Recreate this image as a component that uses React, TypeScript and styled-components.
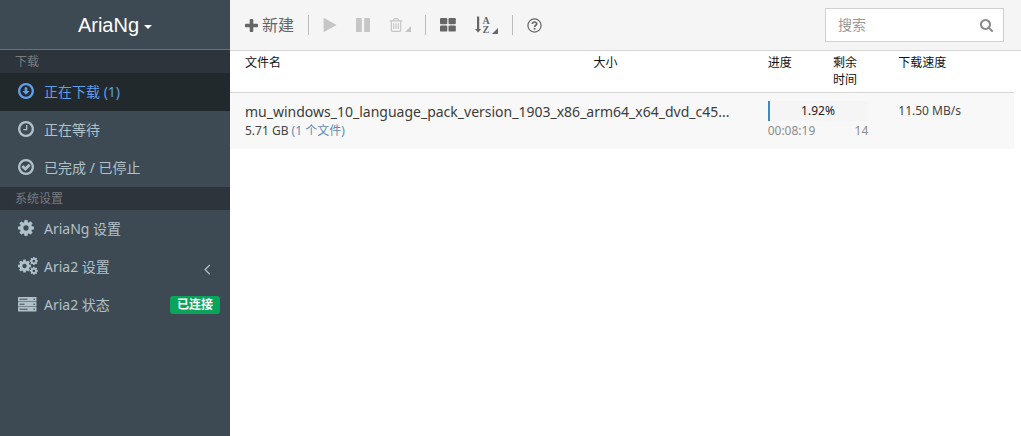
import React from "react";
import styled, { createGlobalStyle, css } from "styled-components";

const GlobalStyle = createGlobalStyle`
  *, *::before, *::after { box-sizing: border-box; }
  body {
    margin: 0;
    background: #fff;
    color: #444;
    font-family: "Noto Sans", "Noto Sans CJK SC", sans-serif;
    font-size: 14px;
    line-height: 20px;
  }
  a { color: inherit; text-decoration: none; }
  button { border: 0; padding: 0; background: none; font: inherit; color: inherit; cursor: pointer; }
  ul { list-style: none; margin: 0; padding: 0; }
`;

const Layout = styled.div`
  display: flex;
  min-height: 100vh;
`;

const Sidebar = styled.aside`
  flex: 0 0 230px;
  background: #3d4a53;
  color: #b0c1ca;
`;

const Brand = styled.header`
  display: flex;
  align-items: center;
  justify-content: center;
  height: 50px;
  border-bottom: 1px solid #6b7175;
`;

const BrandButton = styled.button`
  display: flex;
  align-items: center;
  gap: 5px;
  color: #fff;
  font-family: "Liberation Sans", sans-serif;
  font-size: 20px;
`;

const Caret = styled.span`
  margin-top: 4px;
  border: 4px solid transparent;
  border-top-color: currentColor;
  border-bottom: 0;
`;

const SectionTitle = styled.h2`
  margin: 0;
  padding: 0 15px;
  background: #2d343c;
  color: #777c80;
  font-size: 12px;
  font-weight: 400;
  line-height: 23px;
`;

const NavLink = styled.a<{ $active?: boolean }>`
  display: flex;
  align-items: center;
  height: 38px;
  padding: 0 10px 0 18px;
  ${({ $active }) =>
    $active &&
    css`
      background: #22292d;
      color: #5f9ee8;
    `}
`;

const NavIcon = styled.span`
  display: flex;
  width: 26px;
  padding-bottom: 2px;
`;

const NavLabel = styled.span`
  flex: 1;
`;

const NavArrow = styled.span`
  display: flex;
  padding: 4px 4px 0 0;
`;

const Badge = styled.span`
  padding: 0 7px;
  border-radius: 3px;
  background: #0aa35c;
  color: #fff;
  font-size: 12px;
  font-weight: 700;
  line-height: 18px;
`;

const Main = styled.main`
  flex: 1;
  min-width: 0;
`;

const Toolbar = styled.div`
  display: flex;
  align-items: center;
  gap: 14px;
  height: 51px;
  padding: 0 17px 0 15px;
  border-bottom: 1px solid #d6d6d6;
  background: #f5f5f5;
  color: #666;
`;

const ToolGroup = styled.div`
  display: flex;
  align-items: center;
  gap: 19px;
`;

const ToolButton = styled.button`
  display: flex;
  align-items: center;
  gap: 4px;
  font-size: 16px;
  &:disabled {
    color: #c6c6c6;
    cursor: default;
  }
`;

const MenuCorner = styled.span`
  align-self: flex-end;
  margin-left: -2px;
  border-left: 6px solid transparent;
  border-bottom: 6px solid currentColor;
`;

const Divider = styled.span`
  width: 1px;
  height: 20px;
  background: #bbb;
`;

const SearchBox = styled.form`
  display: flex;
  align-items: center;
  width: 179px;
  height: 34px;
  margin-left: auto;
  padding: 0 10px 0 12px;
  border: 1px solid #d0d0d0;
  background: #fff;
  color: #8a8a8a;
`;

const SearchInput = styled.input`
  flex: 1;
  min-width: 0;
  padding: 0;
  border: 0;
  outline: 0;
  background: none;
  font: inherit;
  &::placeholder { color: #999; opacity: 1; }
`;

const TableArea = styled.div`
  padding-right: 7px;
`;

const Table = styled.table`
  width: 100%;
  border-collapse: collapse;
  table-layout: fixed;
  font-size: 12px;
`;

const Col = styled.col<{ $share: string }>`
  width: ${({ $share }) => $share};
`;

const HeadCell = styled.th`
  padding: 3px 15px 4px;
  border-bottom: 1px solid #d6d6d6;
  color: #111;
  font-weight: 400;
  line-height: 17px;
  text-align: left;
  vertical-align: top;
`;

const TaskRow = styled.tr`
  background: #f8f8f8;
`;

const Cell = styled.td`
  height: 56px;
  padding: 8px 15px 0;
  vertical-align: top;
`;

const TaskName = styled.div`
  overflow: hidden;
  color: #3c3c3c;
  font-size: 14px;
  line-height: 22px;
  white-space: nowrap;
`;

const TaskInfo = styled.div`
  line-height: 16px;
`;

const FilesLink = styled.a`
  color: #6389b0;
`;

const Progress = styled.div`
  position: relative;
  height: 20px;
  background: #f5f5f5;
  color: #222;
  line-height: 20px;
  text-align: center;
`;

const ProgressBar = styled.div`
  position: absolute;
  inset: 0 auto 0 0;
  background: #3c8dbc;
`;

const ProgressInfo = styled.div`
  display: flex;
  justify-content: space-between;
  color: #8c8c8c;
  line-height: 20px;
`;

const Speed = styled.div`
  line-height: 20px;
`;

const RING =
  "M1440 896q0-148-73-273t-198-198-273-73-273 73-198 198-73 273 73 273 198 198 273 73 273-73 198-198 73-273zm224 0q0 209-103 385.5t-279.5 279.5-385.5 103-385.5-103-279.5-279.5-103-385.5 103-385.5 279.5-279.5 385.5-103 385.5 103 279.5 279.5 103 385.5z";

const COG =
  "M1152 896q0-106-75-181t-181-75-181 75-75 181 75 181 181 75 181-75 75-181zm512-109v222q0 12-8 23t-20 13l-185 28q-19 54-39 91 35 50 107 138 10 12 10 25t-9 23q-27 37-99 108t-94 71q-12 0-26-9l-138-108q-44 23-91 38-16 136-29 186-7 28-36 28h-222q-14 0-24.5-8.5t-11.5-21.5l-28-184q-49-16-90-37l-141 107q-10 9-25 9-14 0-25-11-126-114-165-168-7-10-7-23 0-12 8-23 15-21 51-66.5t54-70.5q-27-50-41-99l-183-27q-13-2-21-12.5t-8-23.5v-222q0-12 8-23t19-13l186-28q14-46 39-92-40-57-107-138-10-12-10-24 0-10 9-23 26-36 98.5-107.5t94.5-71.5q13 0 26 10l138 107q44-23 91-38 16-136 29-186 7-28 36-28h222q14 0 24.5 8.5t11.5 21.5l28 184q49 16 90 37l142-107q9-9 24-9 13 0 25 10 129 119 165 170 7 8 7 22 0 12-8 23-15 21-51 66.5t-54 70.5q26 50 41 98l183 28q13 2 21 12.5t8 23.5z";

const PATHS = {
  down:
    "M1216 928q0 12-10 24l-287 287q-10 9-23 9t-23-9l-288-288q-9-9-9-23 0-13 9.500-22.500t22.500-9.500h160v-320q0-13 9.500-22.500t22.500-9.500h192q13 0 22.500 9.500t9.500 22.500v320h160q14 0 23 9t9 23z" +
    RING,
  clock:
    "M1024 544v448q0 14-9 23t-23 9h-320q-14 0-23-9t-9-23v-64q0-14 9-23t23-9h224v-352q0-14 9-23t23-9h64q14 0 23 9t9 23z" + RING,
  check:
    "M1299 813l-422 422q-19 19-45 19t-45-19l-294-294q-19-19-19-45t19-45l102-102q19-19 45-19t45 19l147 147 275-275q19-19 45-19t45 19l102 102q19 19 19 45t-19 45z" +
    RING,
  cog: COG,
  left:
    "M1203 544q0 13-10 23l-393 393 393 393q10 10 10 23t-10 23l-50 50q-10 10-23 10t-23-10l-466-466q-10-10-10-23t10-23l466-466q10-10 23-10t23 10l50 50q10 10 10 23z",
  plus:
    "M1600 736v192q0 40-28 68t-68 28h-416v416q0 40-28 68t-68 28h-192q-40 0-68-28t-28-68v-416h-416q-40 0-68-28t-28-68v-192q0-40 28-68t68-28h416v-416q0-40 28-68t68-28h192q40 0 68 28t28 68v416h416q40 0 68 28t28 68z",
  play:
    "M1576 927l-1328 738q-23 13-39.500 3t-16.500-36v-1472q0-26 16.500-36t39.500 3l1328 738q23 13 23 31t-23 31z",
  pause:
    "M1664 192v1408q0 26-19 45t-45 19h-512q-26 0-45-19t-19-45v-1408q0-26 19-45t45-19h512q26 0 45 19t19 45zm-896 0v1408q0 26-19 45t-45 19h-512q-26 0-45-19t-19-45v-1408q0-26 19-45t45-19h512q26 0 45 19t19 45z",
  trash:
    "M704 736v576q0 14-9 23t-23 9h-64q-14 0-23-9t-9-23v-576q0-14 9-23t23-9h64q14 0 23 9t9 23zm256 0v576q0 14-9 23t-23 9h-64q-14 0-23-9t-9-23v-576q0-14 9-23t23-9h64q14 0 23 9t9 23zm256 0v576q0 14-9 23t-23 9h-64q-14 0-23-9t-9-23v-576q0-14 9-23t23-9h64q14 0 23 9t9 23zm128 724v-948h-896v948q0 22 7 40.5t14.5 27 10.5 8.5h832q3 0 10.5-8.5t14.5-27 7-40.5zm-672-1076h448l-48-117q-7-9-17-11h-317q-10 2-17 11zm928 32v64q0 14-9 23t-23 9h-96v948q0 83-47 143.5t-113 60.5h-832q-66 0-113-58.5t-47-141.5v-952h-96q-14 0-23-9t-9-23v-64q0-14 9-23t23-9h309l70-167q15-37 54-63t79-26h320q40 0 79 26t54 63l70 167h309q14 0 23 9t9 23z",
  search:
    "M1216 832q0-185-131.500-316.500t-316.500-131.500-316.500 131.500-131.500 316.500 131.500 316.500 316.500 131.500 316.500-131.500 131.500-316.500zm512 832q0 52-38 90t-90 38q-54 0-90-38l-343-342q-179 124-399 124-143 0-273.500-55.500t-225-150-150-225-55.500-273.500 55.500-273.500 150-225 225-150 273.500-55.500 273.500 55.500 225 150 150 225 55.500 273.500q0 220-124 399l343 343q37 37 37 90z",
};

/* viewBox of the round and cog glyphs, trimmed to their ink */
const TIGHT = "128 128 1536 1536";

function Glyph({ name, size, box = TIGHT }: { name: keyof typeof PATHS; size: number; box?: string }) {
  return (
    <svg width={size} height={size} viewBox={box} fill="currentColor" fillRule="evenodd" aria-hidden="true">
      <path d={PATHS[name]} />
    </svg>
  );
}

function CogsIcon() {
  return (
    <svg width="20" height="18" viewBox="0 0 20 18" fill="currentColor" aria-hidden="true">
      <g fillRule="evenodd">
        <path d={COG} transform="translate(-1.100 1.400) scale(.0085)" />
        <path d={COG} transform="translate(11.200 -.6) scale(.0052)" />
        <path d={COG} transform="translate(11.200 9.200) scale(.0052)" />
      </g>
    </svg>
  );
}

function ServerIcon() {
  return (
    <svg width="19" height="15" viewBox="0 0 19 15" aria-hidden="true">
      {[0, 5, 10].map((y, i) => (
        <g key={y}>
          <rect x="0" y={y} width="18.500" height="4.400" rx=".6" fill="currentColor" />
          <rect x="1.500" y={y + 1.7} width={[8, 5, 8][i]} height="1" fill="#3d4a53" />
          <circle cx="16.200" cy={y + 2.2} r=".8" fill="#3d4a53" />
        </g>
      ))}
    </svg>
  );
}

function TilesIcon() {
  return (
    <svg width="16" height="14" viewBox="0 0 16 14" fill="currentColor" aria-hidden="true">
      <rect x="0" y="0" width="7.300" height="6.200" rx="1.200" />
      <rect x="8.500" y="0" width="7.300" height="6.200" rx="1.200" />
      <rect x="0" y="7.400" width="7.300" height="6.200" rx="1.200" />
      <rect x="8.500" y="7.400" width="7.300" height="6.200" rx="1.200" />
    </svg>
  );
}

function SortIcon() {
  return (
    <svg width="15" height="18" viewBox="0 0 15 18" fill="currentColor" aria-hidden="true">
      <path d="M2 .5h2.200v12.500h2L3.100 16.500 0 13h2z" />
      <text x="7.500" y="7.500" fontFamily="Liberation Serif, serif" fontSize="10" fontWeight="700">A</text>
      <text x="7.500" y="16.500" fontFamily="Liberation Serif, serif" fontSize="10" fontWeight="700">Z</text>
    </svg>
  );
}

function HelpIcon() {
  return (
    <svg width="15" height="15" viewBox="0 0 15 15" fill="none" stroke="currentColor" aria-hidden="true">
      <circle cx="7.500" cy="7.500" r="6.600" strokeWidth="1.200" />
      <path d="M5.300 6Q5.500 4 7.500 4T9.700 5.900C9.700 7.300 7.600 7.300 7.600 9" strokeWidth="1.700" />
      <path d="M6.700 10.800h1.800" strokeWidth="1.700" />
    </svg>
  );
}

export default function App() {
  return (
    <>
      <GlobalStyle />
      <Layout>
        <Sidebar>
          <Brand>
            <BrandButton type="button">
              AriaNg
              <Caret />
            </BrandButton>
          </Brand>
          <nav>
            <SectionTitle>下载</SectionTitle>
            <ul>
              <li>
                <NavLink href="#downloading" $active>
                  <NavIcon><Glyph name="down" size={16} /></NavIcon>
                  <NavLabel>正在下载 (1)</NavLabel>
                </NavLink>
              </li>
              <li>
                <NavLink href="#waiting">
                  <NavIcon><Glyph name="clock" size={16} /></NavIcon>
                  <NavLabel>正在等待</NavLabel>
                </NavLink>
              </li>
              <li>
                <NavLink href="#stopped">
                  <NavIcon><Glyph name="check" size={16} /></NavIcon>
                  <NavLabel>已完成 / 已停止</NavLabel>
                </NavLink>
              </li>
            </ul>
            <SectionTitle>系统设置</SectionTitle>
            <ul>
              <li>
                <NavLink href="#settings-ariang">
                  <NavIcon><Glyph name="cog" size={16} /></NavIcon>
                  <NavLabel>AriaNg 设置</NavLabel>
                </NavLink>
              </li>
              <li>
                <NavLink href="#settings-aria2">
                  <NavIcon><CogsIcon /></NavIcon>
                  <NavLabel>Aria2 设置</NavLabel>
                  <NavArrow><Glyph name="left" size={18} box="0 0 1792 1792" /></NavArrow>
                </NavLink>
              </li>
              <li>
                <NavLink href="#status">
                  <NavIcon><ServerIcon /></NavIcon>
                  <NavLabel>Aria2 状态</NavLabel>
                  <Badge>已连接</Badge>
                </NavLink>
              </li>
            </ul>
          </nav>
        </Sidebar>
        <Main>
          <Toolbar>
            <ToolButton type="button">
              <Glyph name="plus" size={13} box="192 128 1408 1408" />
              新建
            </ToolButton>
            <Divider />
            <ToolGroup>
              <ToolButton type="button" aria-label="开始" disabled>
                <Glyph name="play" size={14} />
              </ToolButton>
              <ToolButton type="button" aria-label="暂停" disabled>
                <Glyph name="pause" size={14} />
              </ToolButton>
              <ToolButton type="button" aria-label="删除" disabled>
                <Glyph name="trash" size={14} />
                <MenuCorner />
              </ToolButton>
            </ToolGroup>
            <Divider />
            <ToolGroup>
              <ToolButton type="button" aria-label="显示">
                <TilesIcon />
              </ToolButton>
              <ToolButton type="button" aria-label="排序">
                <SortIcon />
                <MenuCorner />
              </ToolButton>
            </ToolGroup>
            <Divider />
            <ToolButton type="button" aria-label="帮助">
              <HelpIcon />
            </ToolButton>
            <SearchBox role="search">
              <SearchInput type="text" aria-label="搜索" placeholder="搜索" />
              <Glyph name="search" size={13} box="64 128 1664 1664" />
            </SearchBox>
          </Toolbar>
          <TableArea>
            <Table>
              <colgroup>
                <Col $share="calc(100% * 4 / 9)" />
                <Col $share="calc(100% * 2 / 9)" />
                <Col $share="calc(100% / 12)" />
                <Col $share="calc(100% / 12)" />
                <Col $share="calc(100% / 6)" />
              </colgroup>
              <thead>
                <tr>
                  <HeadCell scope="col">文件名</HeadCell>
                  <HeadCell scope="col">大小</HeadCell>
                  <HeadCell scope="col">进度</HeadCell>
                  <HeadCell scope="col">剩余时间</HeadCell>
                  <HeadCell scope="col">下载速度</HeadCell>
                </tr>
              </thead>
              <tbody>
                <TaskRow>
                  <Cell colSpan={2}>
                    <TaskName>mu_windows_10_language_pack_version_1903_x86_arm64_x64_dvd_c45...</TaskName>
                    <TaskInfo>
                      5.71 GB <FilesLink href="#files">(1 个文件)</FilesLink>
                    </TaskInfo>
                  </Cell>
                  <Cell colSpan={2}>
                    <Progress>
                      <ProgressBar style={{ width: "1.92%" }} />
                      1.92%
                    </Progress>
                    <ProgressInfo>
                      <span>00:08:19</span>
                      <span>14</span>
                    </ProgressInfo>
                  </Cell>
                  <Cell>
                    <Speed>11.50 MB/s</Speed>
                  </Cell>
                </TaskRow>
              </tbody>
            </Table>
          </TableArea>
        </Main>
      </Layout>
    </>
  );
}
